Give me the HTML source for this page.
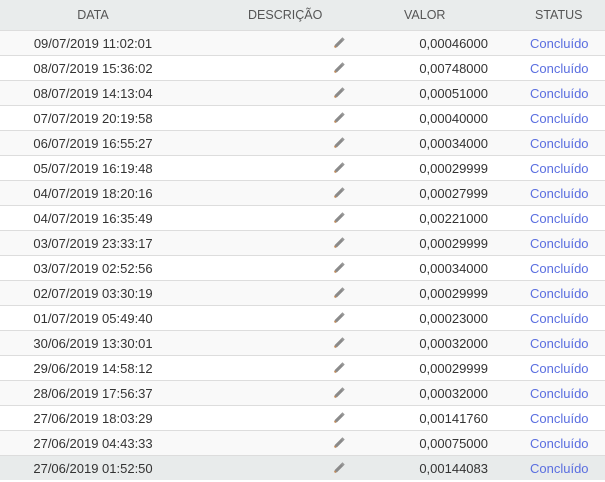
<!DOCTYPE html>
<html><head><meta charset="utf-8"><style>
*{margin:0;padding:0;box-sizing:border-box}
body{width:605px;height:479px;overflow:hidden;background:#fff;font-family:"Liberation Sans",Arial,sans-serif;font-size:13px;color:#333}
.h{position:absolute;left:0;top:0;width:605px;height:30px;background:#e9ecec;color:#555;font-size:12.5px}
.h span,.r span{position:absolute;top:0;line-height:30px;white-space:nowrap}
.r{position:absolute;left:0;width:605px;height:25px;border-top:1px solid #ddd}
.r span{line-height:26px}
.r.last{background:#e8ebeb}
.d{left:0;width:186px;text-align:center}
.v{right:117px;text-align:right}
.s{left:530px;color:#5a6ee0}
.p{position:absolute;left:333px;top:5px}
</style></head><body>
<div class="h"><span style="left:0;width:186px;text-align:center">DATA</span><span style="left:248px">DESCRIÇÃO</span><span style="left:404px">VALOR</span><span style="left:535px">STATUS</span></div>
<div id="w"></div>
<script>
var d=[["09/07/2019 11:02:01","0,00046000"],["08/07/2019 15:36:02","0,00748000"],["08/07/2019 14:13:04","0,00051000"],["07/07/2019 20:19:58","0,00040000"],["06/07/2019 16:55:27","0,00034000"],["05/07/2019 16:19:48","0,00029999"],["04/07/2019 18:20:16","0,00027999"],["04/07/2019 16:35:49","0,00221000"],["03/07/2019 23:33:17","0,00029999"],["03/07/2019 02:52:56","0,00034000"],["02/07/2019 03:30:19","0,00029999"],["01/07/2019 05:49:40","0,00023000"],["30/06/2019 13:30:01","0,00032000"],["29/06/2019 14:58:12","0,00029999"],["28/06/2019 17:56:37","0,00032000"],["27/06/2019 18:03:29","0,00141760"],["27/06/2019 04:43:33","0,00075000"],["27/06/2019 01:52:50","0,00144083"]];
var pen='<svg class="p" width="13" height="13" viewBox="0 0 13 13"><path d="M2.5 10.5 L9.5 3.5" stroke="#8a8a8a" stroke-width="3.2" stroke-linecap="butt"/><path d="M2.8 10.2 L1.6 11.4" stroke="#c08a5a" stroke-width="2"/><path d="M9 4 L10.6 2.4" stroke="#999" stroke-width="3.2"/></svg>';
var h='';
d.forEach(function(x,i){h+='<div class="r'+(i==17?' last':'')+'" style="top:'+(30+25*i)+'px;'+(i%2==0&&i!=17?'background:#f9f9f9':(i==17?'':'background:#fff'))+'"><span class="d">'+x[0]+'</span>'+pen+'<span class="v">'+x[1]+'</span><span class="s">Concluído</span></div>';});
document.getElementById('w').innerHTML=h;
</script>
</body></html>
